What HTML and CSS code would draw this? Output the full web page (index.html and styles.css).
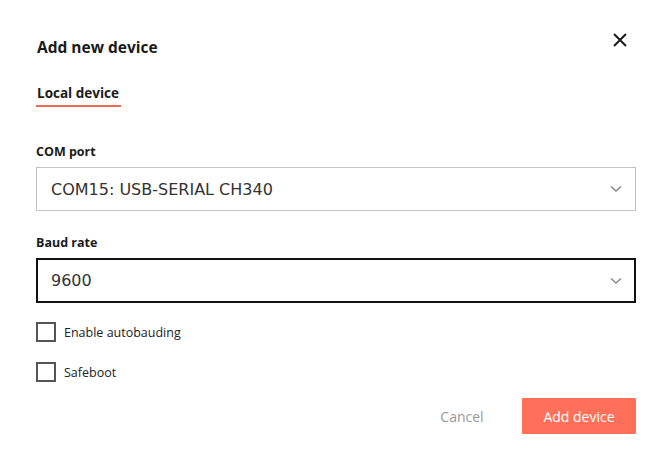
FILE: index.html
```html
<!DOCTYPE html>
<html>
<head>
<meta charset="utf-8">
<link rel="stylesheet" href="styles.css">
</head>
<body>
<div class="dialog">
  <div class="header">
    <h1 class="title">Add new device</h1>
    <button class="close" aria-label="Close">
      <svg width="14" height="14" viewBox="0 0 14 14"><path d="M1 1 L13 13 M13 1 L1 13" stroke="#1a1a1a" stroke-width="2" fill="none"/></svg>
    </button>
  </div>
  <div class="tabs"><span class="tab">Local device</span></div>
  <div class="field">
    <label class="label">COM port</label>
    <div class="select">
      <span class="value">COM15: USB-SERIAL CH340</span>
      <svg class="chev" width="12" height="8" viewBox="0 0 12 8"><path d="M1 1.5 L6 6 L11 1.5" stroke="#888" stroke-width="1.5" fill="none"/></svg>
    </div>
  </div>
  <div class="field">
    <label class="label">Baud rate</label>
    <div class="select active">
      <span class="value">9600</span>
      <svg class="chev" width="12" height="8" viewBox="0 0 12 8"><path d="M1 1.5 L6 6 L11 1.5" stroke="#888" stroke-width="1.5" fill="none"/></svg>
    </div>
  </div>
  <div class="checks">
    <label class="check"><span class="box"></span><span>Enable autobauding</span></label>
    <label class="check"><span class="box"></span><span>Safeboot</span></label>
  </div>
  <div class="actions">
    <button class="btn cancel">Cancel</button>
    <button class="btn primary">Add device</button>
  </div>
</div>
</body>
</html>
```
FILE: styles.css
```css
* { box-sizing: border-box; }
html, body { margin: 0; padding: 0; background: #fff; }
body { font-family: "Open Sans", "Liberation Sans", sans-serif; color: #1a1a1a; }
.dialog { width: 671px; height: 454px; padding: 28px 35px 0 36px; display: flex; flex-direction: column; }
.header { display: flex; justify-content: space-between; align-items: center; height: 38px; }
.title { margin: 0; font-size: 15.5px; font-weight: 700; padding-left: 1px; }
.close { background: none; border: 0; padding: 0; margin-right: 9px; margin-top: -14px; width: 14px; height: 14px; display: flex; }
.tabs { margin-top: 18px; display: flex; }
.tab { font-size: 13.5px; font-weight: 700; padding: 0 0 3px 1px; border-bottom: 2px solid #ee6a56; width: 85px; white-space: nowrap; }
.field { display: flex; flex-direction: column; }
.tabs + .field { margin-top: 36px; }
.field + .field { margin-top: 23px; }
.label { font-size: 12.5px; font-weight: 700; margin-bottom: 7px; }
.select { height: 44px; border: 1px solid #c4c4c4; display: flex; align-items: center; justify-content: space-between; padding: 0 13px 0 14px; }
.select.active { border: 2px solid #111; padding: 0 12px 0 13px; height: 45px; }
.value { font-family: "DejaVu Sans", Verdana, sans-serif; font-size: 16px; color: #333; }
.checks { margin-top: 19px; display: flex; flex-direction: column; gap: 20px; }
.check { display: flex; align-items: center; gap: 8px; font-size: 12.5px; color: #222; }
.box { width: 20px; height: 20px; border: 2px solid #555; display: block; }
.actions { margin-top: 16px; display: flex; justify-content: flex-end; gap: 10px; }
.btn { font-family: "Open Sans", "Liberation Sans", sans-serif; font-size: 14px; border: 0; height: 36px; cursor: pointer; }
.cancel { background: none; color: #999; width: 100px; }
.primary { background: #ff6f5a; color: #fff; width: 114px; }
```
